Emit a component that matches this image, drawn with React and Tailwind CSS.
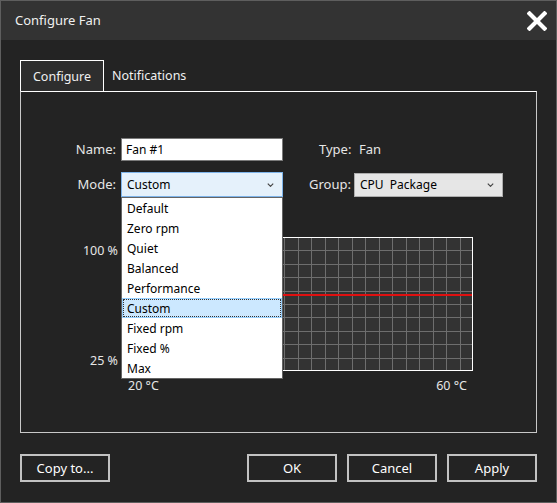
import React from "react";

const FONT = { fontFamily: '"Noto Sans", "Open Sans", sans-serif' };

const modes = [
  "Default",
  "Zero rpm",
  "Quiet",
  "Balanced",
  "Performance",
  "Custom",
  "Fixed rpm",
  "Fixed %",
  "Max",
];

const Chevron = () => (
  <svg width="7" height="4" viewBox="0 0 7 4" className="shrink-0">
    <path d="M0.8 0.6 L3.5 3.3 L6.2 0.6" fill="none" stroke="#444" strokeWidth="1.2" />
  </svg>
);

const CloseIcon = () => (
  <svg width="20" height="20" viewBox="0 0 20 20">
    <path d="M2.5 2.5 L17.5 17.5 M17.5 2.5 L2.5 17.5" stroke="#fff" strokeWidth="4.2" strokeLinecap="square" />
  </svg>
);

// fan curve grid, 26 columns x 10 rows
const CurveChart = () => {
  const w = 351;
  const h = 134;
  const cols = 26;
  const rows = 10;
  return (
    <svg width={w} height={h} className="block">
      <rect x="0" y="0" width={w} height={h} fill="#333333" />
      {Array.from({ length: cols - 1 }, (_, i) => {
        const x = Math.round(((i + 1) * w) / cols) + 0.5;
        return <line key={"c" + i} x1={x} y1="0" x2={x} y2={h} stroke="#6e6e6e" strokeWidth="1" />;
      })}
      {Array.from({ length: rows - 1 }, (_, i) => {
        const y = Math.round(((i + 1) * h) / rows) + 0.5;
        return <line key={"r" + i} x1="0" y1={y} x2={w} y2={y} stroke="#6e6e6e" strokeWidth="1" />;
      })}
      <line x1="0" y1="58" x2={w} y2="58" stroke="#e01010" strokeWidth="2" />
      <rect x="0.5" y="0.5" width={w - 1} height={h - 1} fill="none" stroke="#ffffff" strokeWidth="1" />
    </svg>
  );
};

const DialogButton = ({ children }) => (
  <button className="w-[90px] h-[28px] border-2 border-[#c2c2c2] pt-[1px] text-[13px] text-white bg-transparent flex items-center justify-center">
    {children}
  </button>
);

export default function App() {
  return (
    <div
      style={FONT}
      className="relative w-[557px] h-[503px] bg-[#232323] border border-[#5e5e5e] flex flex-col text-[#e6e6e6]"
    >
      <div className="h-[39px] bg-[#333333] flex items-center justify-between pl-[14px] pr-[9px]">
        <span className="text-[13px] text-[#f0f0f0]">Configure Fan</span>
        <CloseIcon />
      </div>

      <div className="flex-1 flex flex-col px-[19px] pt-[20px] pb-[20px]">
        {/* tab strip */}
        <div className="flex h-[31px] items-stretch">
          <div className="w-[84px] border-x border-t border-white bg-[#2e2e2e] flex items-center justify-center pt-[2px] text-[12.5px] text-[#f0f0f0]">
            Configure
          </div>
          <div className="flex items-center pl-[8px] pt-[2px] text-[12.5px] text-[#f0f0f0]">Notifications</div>
        </div>

        {/* tab panel */}
        <div className="h-[342px] border border-[#c8c8c8] border-t-white flex flex-col pt-[46px]">
          <div className="flex items-center h-[23px]">
            <span className="w-[95px] text-right text-[13px]">Name:</span>
            <div className="ml-[5px] w-[162px] h-[23px] bg-white border border-[#7a7a7a] flex items-center pl-[4px] text-[12px] text-black">
              Fan #1
            </div>
            <span className="ml-[36px] w-[40px] text-[13px]">Type:</span>
            <span className="text-[13px]">Fan</span>
          </div>

          <div className="flex items-center h-[25px] mt-[11px]">
            <span className="w-[95px] text-right text-[13px]">Mode:</span>
            <div className="relative ml-[5px] w-[162px] h-[25px]">
              <div className="w-full h-full bg-[#e5f1fb] border border-[#7eb4ea] flex items-center justify-between pl-[5px] pr-[8px] text-[12px] text-black">
                <span>Custom</span>
                <Chevron />
              </div>
              {/* open dropdown list */}
              <div className="absolute left-0 top-[25px] z-10 w-[162px] bg-white border border-[#646464] flex flex-col">
                {modes.map((m) =>
                  m === "Custom" ? (
                    <div key={m} className="h-[20px] bg-[#cce8ff] border border-[#99d1ff]">
                      <div className="h-full border border-dotted border-[#333] flex items-center pl-[3px] pt-[1px] text-[12px] text-black">
                        {m}
                      </div>
                    </div>
                  ) : (
                    <div key={m} className="h-[20px] flex items-center pl-[5px] pt-[1px] text-[12px] text-black">
                      {m}
                    </div>
                  )
                )}
              </div>
            </div>
            <span className="ml-[26px] w-[45px] text-[13px]">Group:</span>
            <div className="w-[149px] h-[24px] bg-[#e6e6e6] border border-[#adadad] flex items-center justify-between pl-[5px] pr-[8px] text-[12px] text-black">
              <span className="whitespace-pre">CPU  Package</span>
              <Chevron />
            </div>
          </div>

          {/* curve area */}
          <div className="flex mt-[40px]">
            <div className="w-[97px] h-[134px] flex flex-col justify-between items-end pt-[5px] text-[12.5px]">
              <span>100 %</span>
              <span>25 %</span>
            </div>
            <div className="ml-[4px] flex flex-col">
              <CurveChart />
              <div className="flex justify-between px-[6px] mt-[6px] text-[12.5px]">
                <span>20 °C</span>
                <span>60 °C</span>
              </div>
            </div>
          </div>
        </div>

        {/* dialog buttons */}
        <div className="flex items-center mt-auto">
          <DialogButton>Copy to...</DialogButton>
          <div className="ml-auto flex gap-[10px]">
            <DialogButton>OK</DialogButton>
            <DialogButton>Cancel</DialogButton>
            <DialogButton>Apply</DialogButton>
          </div>
        </div>
      </div>
    </div>
  );
}
